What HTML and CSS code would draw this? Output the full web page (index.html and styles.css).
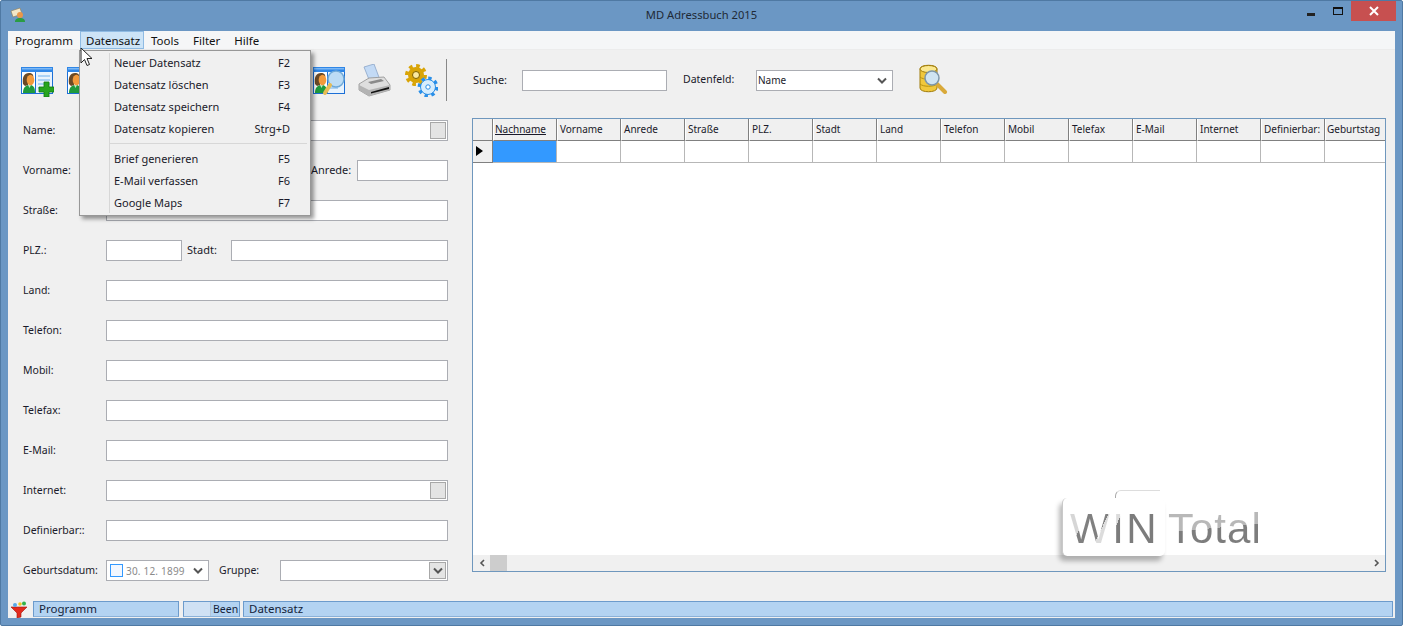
FILE: index.html
```html
<!DOCTYPE html>
<html lang="de">
<head>
<meta charset="utf-8">
<title>MD Adressbuch 2015</title>
<link rel="stylesheet" href="styles.css">
</head>
<body>
<svg class="defs" width="0" height="0">
  <symbol id="person" viewBox="0 0 32 30">
    <rect x="0.5" y="0.5" width="31" height="26" fill="#fff" stroke="#1c6fd6"/>
    <rect x="0" y="0" width="32" height="5" fill="#2f86e6"/>
    <rect x="1" y="1" width="30" height="1.5" fill="#7cb8f5"/>
    <line x1="14.5" y1="5" x2="14.5" y2="27" stroke="#1c6fd6"/>
    <rect x="15" y="5" width="16" height="21" fill="#e8f3fd"/>
    <path d="M17 9h12M17 13h12M17 17h12M17 21h8" stroke="#6fb0ec"/>
    <path d="M2 26c0-5 2-7 5-8h3c3 1 4 3 4 8z" fill="#1f9a3c"/>
    <path d="M7 18l1.500 3 1.500-3z" fill="#bfe6c6"/>
    <path d="M2 17c-1-7 1-11 6-11 3 0 5 2 4 4l-4 1-1 7-3 1z" fill="#6b4a26"/>
    <ellipse cx="9.500" cy="13" rx="3.800" ry="5.200" fill="#f39a3b"/>
  </symbol>
  <symbol id="chev" viewBox="0 0 10 8">
    <path d="M1 1.500l4 4 4-4" fill="none" stroke="#555" stroke-width="2"/>
  </symbol>
</svg>

<div class="window">
  <header class="titlebar">
    <svg class="appicon" viewBox="0 0 16 16" aria-hidden="true">
      <path d="M1 4l9-3 2 6-9 3z" fill="#f3e7c8" stroke="#8d7a55" stroke-width=".6"/>
      <circle cx="10" cy="8" r="3" fill="#e9964a"/>
      <path d="M5 15c0-3 2-4 5-4s5 1 5 4z" fill="#2a9c44"/>
    </svg>
    <span class="title">MD Adressbuch 2015</span>
    <div class="controls">
      <span class="ctl-min"></span>
      <span class="ctl-max"></span>
      <span class="ctl-close">
        <svg viewBox="0 0 10 10" width="10" height="10" aria-hidden="true"><path d="M1 1l8 8M9 1l-8 8" stroke="#fff" stroke-width="2"/></svg>
      </span>
    </div>
  </header>

  <div class="client">
    <nav class="menubar">
      <span class="mitem first">Programm</span>
      <span class="mitem active">Datensatz</span>
      <span class="mitem">Tools</span>
      <span class="mitem">Filter</span>
      <span class="mitem">Hilfe</span>
    </nav>

    <main class="main">
      <section class="left">
        <div class="toolbar">
          <span class="tb"><svg class="tbicon" viewBox="0 0 33 30"><use href="#person" width="32" height="30"/><path d="M23 15h5v5h5v5h-5v5h-5v-5h-5v-5h5z" fill="#27a51f" stroke="#0f7a12" stroke-width=".8"/></svg></span>
          <span class="tb"><svg class="tbicon" viewBox="0 0 33 30"><use href="#person" width="32" height="30"/></svg></span>
          <span class="tb"><svg class="tbicon" viewBox="0 0 33 30"><use href="#person" width="32" height="30"/></svg></span>
          <span class="tb"><svg class="tbicon" viewBox="0 0 33 30"><use href="#person" width="32" height="30"/></svg></span>
          <span class="tb"><svg class="tbicon" viewBox="0 0 33 30"><use href="#person" width="32" height="30"/></svg></span>
          <span class="tb"><svg class="tbicon" viewBox="0 0 33 30"><use href="#person" width="32" height="30"/></svg></span>
          <span class="tb tb-find"><svg class="tbicon" viewBox="0 0 33 30"><use href="#person" width="32" height="30"/><circle cx="23" cy="12" r="8" fill="#bcdcf5" stroke="#6ea9d8" stroke-width="1.500"/><path d="M17 18l-5 8" stroke="#e8bd55" stroke-width="4" stroke-linecap="round"/></svg></span>
          <span class="tb-print"><svg class="printer" viewBox="0 0 34 34">
            <path d="M6 3l10-3 6 16-10 2z" fill="#c3daf5" stroke="#8aa5c8" stroke-width=".8"/>
            <path d="M1 20l10-6 15-1 6 8 0 5-21 6-10-6z" fill="#dedede" stroke="#8f8f8f" stroke-width=".8"/>
            <path d="M1 21l10 5 21-5 0 5-21 6-10-6z" fill="#b3b3b3"/>
            <path d="M13 28l18-5 0 2-18 4.500z" fill="#111"/>
            <path d="M10 18l13-3 3 2-13 3z" fill="#8a8a8a"/>
          </svg></span>
          <span class="tb-gear"><svg class="gears" viewBox="0 0 33 33">
            <circle cx="11" cy="11" r="8" fill="#d9a406"/>
            <circle cx="11" cy="11" r="9.200" fill="none" stroke="#d9a406" stroke-width="3.600" stroke-dasharray="3.600 3.600"/>
            <circle cx="11" cy="11" r="3.500" fill="#fbe9a0" stroke="#7d5f00"/>
            <circle cx="23" cy="23" r="7.500" fill="#d7edfd" stroke="#2a8fe8"/>
            <circle cx="23" cy="23" r="8.800" fill="none" stroke="#2a8fe8" stroke-width="3.200" stroke-dasharray="3.400 3.500"/>
            <circle cx="23" cy="23" r="2.200" fill="#fff" stroke="#2a8fe8"/>
          </svg></span>
          <span class="tb-sep"></span>
        </div>

        <form class="form">
          <div class="row"><label class="lbl">Name:</label><div class="field fill has-btn"><span class="sbtn"></span></div></div>
          <div class="row"><label class="lbl">Vorname:</label><div class="field w-vor"></div><label class="lbl-in w-anr-l">Anrede:</label><div class="field fill"></div></div>
          <div class="row"><label class="lbl">Straße:</label><div class="field fill"></div></div>
          <div class="row"><label class="lbl">PLZ.:</label><div class="field w-plz"></div><label class="lbl-in w-std-l">Stadt:</label><div class="field fill"></div></div>
          <div class="row"><label class="lbl">Land:</label><div class="field fill"></div></div>
          <div class="row"><label class="lbl">Telefon:</label><div class="field fill"></div></div>
          <div class="row"><label class="lbl">Mobil:</label><div class="field fill"></div></div>
          <div class="row"><label class="lbl">Telefax:</label><div class="field fill"></div></div>
          <div class="row"><label class="lbl">E-Mail:</label><div class="field fill"></div></div>
          <div class="row"><label class="lbl">Internet:</label><div class="field fill has-btn"><span class="sbtn"></span></div></div>
          <div class="row"><label class="lbl">Definierbar::</label><div class="field fill"></div></div>
          <div class="row">
            <label class="lbl">Geburtsdatum:</label>
            <div class="field w-date"><span class="check"></span><span class="date">30. 12. 1899</span><svg class="chev"><use href="#chev"/></svg></div>
            <label class="w-grp-l">Gruppe:</label>
            <div class="field fill combo"><span class="cbtn"><svg class="chev2"><use href="#chev"/></svg></span></div>
          </div>
        </form>
      </section>

      <section class="right">
        <div class="searchbar">
          <label class="s-lbl s1">Suche:</label>
          <div class="field w-search"></div>
          <label class="s-lbl s2">Datenfeld:</label>
          <div class="field w-df"><span class="df-val">Name</span><svg class="chev"><use href="#chev"/></svg></div>
          <svg class="dbicon" viewBox="0 0 30 30">
            <path d="M1 5c0-5 17-5 17 0v19c0 5-17 5-17 0z" fill="#f0c83c" stroke="#a07c0c"/>
            <path d="M1 13c3 3 14 3 17 0M1 20c3 3 14 3 17 0" fill="none" stroke="#b8920f"/>
            <ellipse cx="9.500" cy="5" rx="8.500" ry="3.500" fill="#fbe88e" stroke="#a07c0c"/>
            <path d="M17 19l9 9" stroke="#d9a93a" stroke-width="4" stroke-linecap="round"/>
            <circle cx="13" cy="14" r="7" fill="#cfe4f2" stroke="#7d96a8" stroke-width="1.500"/>
          </svg>
        </div>

        <div class="grid">
          <div class="g-head">
            <span class="g-corner"></span>
            <span class="hc sorted">Nachname</span>
            <span class="hc">Vorname</span>
            <span class="hc">Anrede</span>
            <span class="hc">Straße</span>
            <span class="hc">PLZ.</span>
            <span class="hc">Stadt</span>
            <span class="hc">Land</span>
            <span class="hc">Telefon</span>
            <span class="hc">Mobil</span>
            <span class="hc">Telefax</span>
            <span class="hc">E-Mail</span>
            <span class="hc">Internet</span>
            <span class="hc">Definierbar:</span>
            <span class="hc last">Geburtstag</span>
          </div>
          <div class="g-row">
            <span class="g-ind"><i class="tri"></i></span>
            <span class="dc sel"></span>
            <span class="dc"></span><span class="dc"></span><span class="dc"></span><span class="dc"></span><span class="dc"></span><span class="dc"></span><span class="dc"></span><span class="dc"></span><span class="dc"></span><span class="dc"></span><span class="dc"></span><span class="dc"></span>
            <span class="dc last"></span>
          </div>
          <div class="g-empty"></div>
          <div class="g-scroll">
            <span class="arr"><svg viewBox="0 0 6 8" width="6" height="8"><path d="M5 1L2 4l3 3" fill="none" stroke="#555" stroke-width="1.600"/></svg></span>
            <span class="thumb"></span>
            <span class="track"></span>
            <span class="arr"><svg viewBox="0 0 6 8" width="6" height="8"><path d="M1 1l3 3-3 3" fill="none" stroke="#555" stroke-width="1.600"/></svg></span>
          </div>
          <div class="wm">
            <span class="wm-tab"></span>
            <span class="wm-card"></span>
            <span class="wm-text">WIN</span>
            <span class="wm-total">Total</span>
          </div>
        </div>
      </section>
    </main>

    <footer class="status">
      <svg class="funnel" viewBox="0 0 17 17">
        <path d="M0 6h16l-6 6v4l-4 1v-5z" fill="#e32b1e" stroke="#a3140c" stroke-width=".6"/>
        <circle cx="4" cy="4" r="2" fill="#58a8e8"/>
        <circle cx="9" cy="3" r="1.800" fill="#f2c81e"/>
        <circle cx="13" cy="2.500" r="2" fill="#33b24a"/>
      </svg>
      <span class="st st-prog">Programm</span>
      <span class="st st-been"><span class="st-blank"></span><span class="st-txt">Been</span></span>
      <span class="st st-data">Datensatz</span>
    </footer>

    <div class="dropdown">
      <div class="dd-item"><span>Neuer Datensatz</span><span class="key">F2</span></div>
      <div class="dd-item"><span>Datensatz löschen</span><span class="key">F3</span></div>
      <div class="dd-item"><span>Datensatz speichern</span><span class="key">F4</span></div>
      <div class="dd-item"><span>Datensatz kopieren</span><span class="key">Strg+D</span></div>
      <div class="dd-sep"></div>
      <div class="dd-item"><span>Brief generieren</span><span class="key">F5</span></div>
      <div class="dd-item"><span>E-Mail verfassen</span><span class="key">F6</span></div>
      <div class="dd-item"><span>Google Maps</span><span class="key">F7</span></div>
    </div>

    <svg class="cursor" viewBox="0 0 13 20">
      <path d="M1 1v15l3.500-3.500 2.500 6 2.500-1-2.500-6h5z" fill="#fff" stroke="#222" stroke-width="1"/>
    </svg>
  </div>
</div>
</body>
</html>
```

FILE: styles.css
```css
* { box-sizing: border-box; }
html, body { margin: 0; height: 100%; background: #fff; overflow: hidden; }
body { font: 11px/1.2 "Noto Sans", "Open Sans", "Liberation Sans", sans-serif; color: #1a1a2a; }
.defs { position: absolute; }

.window {
  width: 1403px; height: 626px;
  display: flex; flex-direction: column;
  background: #6b97c4;
  border: 1px solid #4f79a3;
  border-radius: 2px;
  padding: 0 7px 7px 7px;
}

/* Title bar */
.titlebar { height: 30px; display: flex; align-items: flex-start; position: relative; flex: none; }
.appicon { width: 16px; height: 16px; margin: 6px 0 0 2px; }
.title { position: absolute; left: 0; right: 0; top: 7px; text-align: center; font-size: 11.2px; color: #1f2a36; }
.controls { margin-left: auto; display: flex; align-items: flex-start; position: relative; margin-right: -1px; }
.ctl-min { width: 8px; height: 3px; background: #222; margin: 12px 18px 0 0; }
.ctl-max { width: 10px; height: 8px; border: 1px solid #111; border-top-width: 2px; margin: 6px 8px 0 0; }
.ctl-close { width: 45px; height: 20px; background: #c75050; display: flex; align-items: center; justify-content: center; }

/* Client */
.client { flex: 1; display: flex; flex-direction: column; background: #f0f0f0; position: relative; min-height: 0; }

.menubar { height: 19px; flex: none; background: #f5f6f7; display: flex; font-size: 11.5px; align-items: stretch; border-bottom: 1px solid #ececec; }
.mitem { padding: 1px 6px 0 6px; border: 1px solid transparent; border-bottom: 0; color: #111; line-height: 15px; }
.mitem.first { width: 72px; flex: none; }
.mitem.active { width: 64px; flex: none; padding-left: 5px; background: #cde4f7; border: 1px solid #8fbbe3; }

.main { flex: 1; display: flex; min-height: 0; }

/* Left */
.left { width: 440px; flex: none; }
.toolbar { height: 60px; display: flex; align-items: flex-start; padding: 17px 0 0 13px; position: relative; }
.tb { width: 46px; flex: none; }
.tb-find { width: 45px; margin-left: 16px; }
.tbicon { width: 33px; height: 30px; display: block; }
.tb-print { width: 47px; margin-top: -3px; flex: none; }
.printer { width: 34px; height: 34px; display: block; }
.tb-gear { width: 41px; margin-top: -3px; flex: none; }
.gears { width: 33px; height: 33px; display: block; }
.tb-sep { width: 1px; height: 42px; background: #888; margin-top: -8px; flex: none; }

.form { display: flex; flex-direction: column; gap: 19px; padding: 10px 0 0 15px; }
.row { display: flex; align-items: center; height: 21px; }
.lbl { width: 83px; flex: none; font-size: 10.5px; padding-bottom: 1px; }
.lbl-in { padding-bottom: 2px; }
.field { height: 21px; background: #fff; border: 1px solid #abadb3; position: relative; display: flex; align-items: center; }
.fill { flex: 1; }
.has-btn { justify-content: flex-end; padding-right: 1px; }
.sbtn { width: 16px; height: 17px; background: #e4e4e4; border: 1px solid #a8a8a8; }
.w-vor { width: 199px; flex: none; }
.w-anr-l { width: 52px; padding-left: 6px; flex: none; }
.w-plz { width: 76px; flex: none; }
.w-std-l { width: 49px; padding-left: 5px; flex: none; }
.w-date { width: 103px; flex: none; padding-left: 3px; }
.w-grp-l { width: 71px; padding: 0 0 1px 10px; flex: none; font-size: 10.5px; }
.check { width: 13px; height: 13px; border: 1px solid #3399ff; background: #f2f7ff; flex: none; }
.date { margin-left: 3px; color: #8a8a8a; font-size: 10px; letter-spacing: .2px; white-space: nowrap; }
.chev { width: 10px; height: 8px; position: absolute; right: 5px; top: 6px; }
.combo { justify-content: flex-end; padding-right: 1px; }
.cbtn { width: 17px; height: 17px; background: #e4e4e4; border: 1px solid #a8a8a8; display: flex; align-items: center; justify-content: center; }
.chev2 { width: 10px; height: 8px; }

/* Right */
.right { flex: 1; min-width: 0; display: flex; flex-direction: column; padding: 0 9px 29px 24px; }
.searchbar { height: 68px; display: flex; align-items: flex-start; flex: none; padding-top: 20px; position: relative; }
.s-lbl { line-height: 19px; }
.s1 { width: 50px; padding-left: 1px; flex: none; }
.w-search { width: 145px; flex: none; }
.s2 { width: 89px; padding-left: 16px; flex: none; font-size: 10.5px; }
.w-df { width: 137px; flex: none; padding-left: 1px; font-size: 10px; }
.df-val { padding-bottom: 2px; }
.dbicon { width: 30px; height: 30px; margin: -6px 0 0 26px; flex: none; }

.grid { flex: 1; border: 1px solid #6f97bd; background: #fff; display: flex; flex-direction: column; position: relative; overflow: hidden; min-height: 0; }
.g-head { display: flex; height: 22px; flex: none; background: #f0f0f0; font-size: 10px; }
.g-corner { width: 20px; flex: none; border-right: 1px solid #808080; border-bottom: 1px solid #808080; }
.hc { width: 64px; flex: none; padding: 0 0 0 2px; line-height: 20px; border-right: 1px solid #808080; border-bottom: 1px solid #808080; border-left: 1px solid #fff; color: #1a1a2a; white-space: nowrap; }
.hc.sorted { text-decoration: underline; padding-left: 1px; }
.hc.last { width: 61px; border-right: 0; padding-left: 1px; }
.g-row { display: flex; height: 22px; flex: none; }
.g-ind { width: 20px; flex: none; background: #f0f0f0; border-right: 1px solid #808080; border-bottom: 1px solid #808080; display: flex; align-items: center; padding-left: 3px; }
.tri { width: 0; height: 0; border-left: 7px solid #000; border-top: 5px solid transparent; border-bottom: 5px solid transparent; display: block; margin-top: -2px; }
.dc { width: 64px; flex: none; border-right: 1px solid #b7b7b7; border-bottom: 1px solid #b7b7b7; }
.dc.sel { background: #3399ff; }
.dc.last { width: 61px; border-right: 0; }
.g-empty { flex: 1; min-height: 0; }
.g-scroll { height: 16px; flex: none; background: #f0f0f0; display: flex; align-items: center; }
.arr { width: 17px; display: flex; align-items: center; justify-content: center; flex: none; }
.thumb { width: 17px; height: 16px; background: #cdcdcd; flex: none; }
.track { flex: 1; }

/* Watermark */
.wm { position: absolute; left: 589px; top: 371px; width: 210px; height: 75px; }
.wm-card { position: absolute; left: 0; top: 8px; width: 103px; height: 58px; background: #fff; border-left: 1px solid #c9c9c9; border-radius: 5px; box-shadow: -3px 5px 5px rgba(0,0,0,.28); }
.wm-tab { position: absolute; left: 53px; top: 0; width: 45px; height: 8px; border-top: 1px solid #ddd; border-left: 1px solid #aaa; border-radius: 6px 0 0 0; }
.wm-text, .wm-total { position: absolute; top: 17px; font: 42px/44px "Liberation Sans", sans-serif; white-space: nowrap; color: transparent; -webkit-background-clip: text; background-clip: text; }
.wm-text { left: 8px; letter-spacing: 2.5px; background-image: linear-gradient(115deg, #d6d6d6 0 18%, #808080 18% 38%, #dcdcdc 38% 50%, #7c7c7c 50% 100%); }
.wm-total { left: 106px; letter-spacing: 1px; background-image: linear-gradient(175deg, #b8b8b8 0 48%, #7d7d7d 48% 100%); }

/* Status */
.status { height: 17px; flex: none; display: flex; position: relative; background: #f0f0f0; }
.funnel { width: 17px; height: 17px; margin: 0 0 0 3px; flex: none; }
.st { height: 16px; background: #b3d3f2; border: 1px solid #6c9bcc; border-bottom-color: #8ab1d9; font-size: 11.5px; line-height: 14px; padding-left: 5px; color: #13233a; white-space: nowrap; overflow: hidden; display: block; }
.st-prog { width: 146px; margin-left: 5px; }
.st-been { width: 57px; margin-left: 4px; padding: 0; display: flex; }
.st-blank { width: 27px; background: #cfe1f4; border-right: 1px solid #b3c6da; flex: none; }
.st-txt { padding-left: 2px; font-size: 10.5px; }
.st-data { flex: 1; margin-left: 3px; margin-right: 2px; }

/* Dropdown */
.dropdown { position: absolute; left: 71px; top: 19px; width: 232px; height: 166px; background: #f0f0f0; border: 1px solid #979797; padding: 1px 0 0 0; box-shadow: 3px 3px 4px rgba(0,0,0,.4); z-index: 5; }
.dropdown::before { content: ""; position: absolute; left: 29px; top: 2px; bottom: 2px; width: 1px; background: #d7d7d7; }
.dd-item { height: 22px; display: flex; align-items: center; justify-content: space-between; padding: 0 20px 0 34px; color: #1a1a2a; }
.key { color: #1a1a2a; }
.dd-sep { height: 8px; position: relative; }
.dd-sep::after { content: ""; position: absolute; left: 30px; right: 3px; top: 3px; height: 1px; background: #d7d7d7; }

.cursor { position: absolute; left: 72px; top: 16px; width: 13px; height: 20px; z-index: 6; }
```
